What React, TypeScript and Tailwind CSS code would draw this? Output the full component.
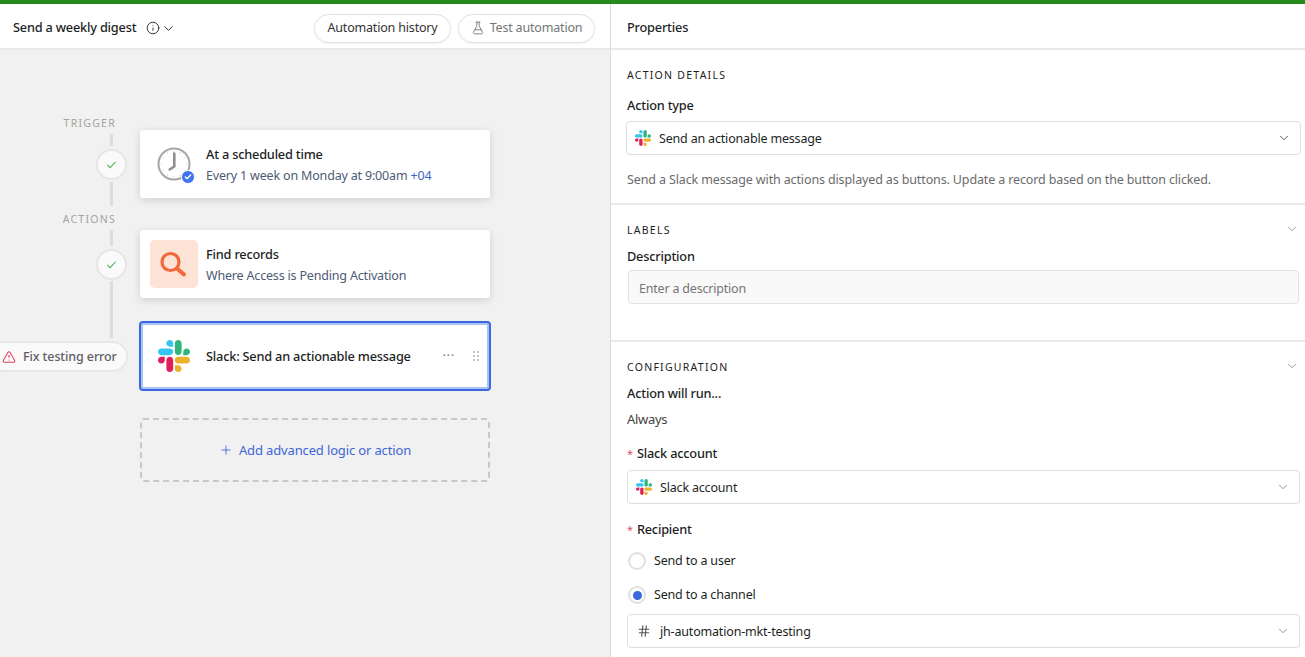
import { Check, ChevronDown, FlaskConical, Hash, Info, Plus, TriangleAlert, X } from "lucide-react";

const body = "text-[12.5px] tracking-[-0.18px]";
const strong = "text-[12.75px] tracking-[-0.2px] font-medium text-[#1d1f25]";

const SlackLogo = ({ className }: { className: string }) => (
	<svg viewBox="0 0 122.8 122.8" className={className}>
		<path d="M25.8 77.6c0 7.1-5.8 12.9-12.9 12.9S0 84.7 0 77.6s5.8-12.9 12.9-12.9h12.9v12.9z" fill="#E01E5A" />
		<path d="M32.3 77.6c0-7.1 5.8-12.9 12.9-12.9s12.9 5.8 12.9 12.9v32.3c0 7.1-5.8 12.9-12.9 12.9s-12.9-5.8-12.9-12.9V77.6z" fill="#E01E5A" />
		<path d="M45.2 25.8c-7.1 0-12.9-5.8-12.9-12.9S38.1 0 45.2 0s12.9 5.8 12.9 12.9v12.9H45.2z" fill="#36C5F0" />
		<path d="M45.2 32.3c7.1 0 12.9 5.8 12.9 12.9s-5.8 12.9-12.9 12.9H12.9C5.8 58.1 0 52.3 0 45.2s5.8-12.9 12.9-12.9h32.3z" fill="#36C5F0" />
		<path d="M97 45.2c0-7.1 5.8-12.9 12.9-12.9s12.9 5.8 12.9 12.9-5.8 12.9-12.9 12.9H97V45.2z" fill="#2EB67D" />
		<path d="M90.5 45.2c0 7.1-5.8 12.9-12.9 12.9s-12.9-5.8-12.9-12.9V12.9C64.7 5.8 70.5 0 77.6 0s12.9 5.8 12.9 12.9v32.3z" fill="#2EB67D" />
		<path d="M77.6 97c7.1 0 12.9 5.8 12.9 12.9s-5.8 12.9-12.9 12.9-12.9-5.8-12.9-12.9V97h12.9z" fill="#ECB22E" />
		<path d="M77.6 90.5c-7.1 0-12.9-5.8-12.9-12.9s5.8-12.9 12.9-12.9h32.3c7.1 0 12.9 5.8 12.9 12.9s-5.8 12.9-12.9 12.9H77.6z" fill="#ECB22E" />
	</svg>
);

const ticks = [30, 60, 90, 120, 150, 180, 210, 240, 270, 300, 330, 360];

const ClockIcon = () => (
	<div className="relative w-[34px] h-[34px]">
		<svg viewBox="0 0 34 34" className="w-[34px] h-[34px]">
			<circle cx="17" cy="17" r="15.5" fill="white" stroke="#a6a6a6" strokeWidth="2" />
			{ticks.map((a) => (
				<line key={a} x1="17" y1="3.5" x2="17" y2="5" stroke="#dcdcdc" strokeWidth="1" transform={`rotate(${a} 17 17)`} />
			))}
			<path d="M17.3 6.5V19.5L12.7 22.5" fill="none" stroke="#8f8f8f" strokeWidth="2.6" strokeLinecap="round" strokeLinejoin="round" />
		</svg>
		<div className="absolute right-[-4px] bottom-[-3px] w-[14px] h-[14px] rounded-full bg-[#3f75ea] border-[1.5px] border-white flex items-center justify-center">
			<Check className="w-[8px] h-[8px] text-white" strokeWidth={4} />
		</div>
	</div>
);

const SearchTile = () => (
	<div className="ml-[10px] mr-[8px] w-[48px] h-[48px] rounded-[5px] bg-[#fde3d6]">
		<svg viewBox="0 0 48 48" className="w-[48px] h-[48px]">
			<circle cx="20.5" cy="22" r="8.5" fill="none" stroke="#f0683c" strokeWidth="3.2" />
			<line x1="27" y1="28.5" x2="34" y2="34.5" stroke="#f0683c" strokeWidth="4" strokeLinecap="round" />
		</svg>
	</div>
);

const Line = ({ className }: { className: string }) => <div className={`ml-[110px] w-[3px] bg-[#dcdcdc] ${className}`} />;

const StepDot = () => (
	<div className="ml-[96px] w-[31px] h-[31px] rounded-full bg-[#fafafa] border-2 border-[#e6e6e6] flex items-center justify-center">
		<svg viewBox="0 0 12 12" className="w-[11px] h-[11px]">
			<path d="M1.5 6.5L4.5 9.5L10.5 3" fill="none" stroke="#4aae50" strokeWidth="1.1" />
		</svg>
	</div>
);

const StepLabel = ({ children }: { children: string }) => (
	<div className="w-[116px] h-[16px] text-right text-[10.5px] leading-[16px] tracking-[0.12em] text-[#a3a3a3]">{children}</div>
);

const Timeline = () => (
	<div className="w-[140px] shrink-0 flex flex-col">
		<StepLabel>TRIGGER</StepLabel>
		<Line className="h-[12px] mt-[3px]" />
		<div className="mt-[3px]">
			<StepDot />
		</div>
		<Line className="h-[24px] mt-[2px]" />
		<div className="mt-[5px]">
			<StepLabel>ACTIONS</StepLabel>
		</div>
		<Line className="h-[16px] mt-[3px]" />
		<div className="mt-[3px]">
			<StepDot />
		</div>
		<Line className="h-[57px] mt-[1px]" />
		<div className="mt-[3px] ml-[-12px] w-[140px] h-[31px] rounded-full bg-[#fafafa] border-2 border-[#e8e8e8] flex items-center pl-[12px] gap-[7px] text-[12.5px] tracking-[-0.1px] font-medium text-[#5e5e66]">
			<TriangleAlert className="w-[14px] h-[14px] text-[#dc3c5e]" strokeWidth={1.75} />
			<span className="pt-[1px]">Fix testing error</span>
		</div>
	</div>
);

const Cards = () => (
	<div className="w-[350px] shrink-0 flex flex-col mt-[15px]">
		<div className="h-[68px] bg-white rounded-[3px] shadow-[0_2px_8px_rgba(0,0,0,0.14)] flex items-center">
			<div className="w-[66px] pl-[17px]">
				<ClockIcon />
			</div>
			<div className="pt-[2px]">
				<div className={`${strong} leading-[21px]`}>At a scheduled time</div>
				<div className={`${body} leading-[21px] text-[#4d5a75]`}>
					Every 1 week on Monday at 9:00am <span className="text-[#3a66c8]">+04</span>
				</div>
			</div>
		</div>
		<div className="mt-[32px] h-[68px] bg-white rounded-[3px] shadow-[0_2px_8px_rgba(0,0,0,0.14)] flex items-center">
			<SearchTile />
			<div className="pt-[2px]">
				<div className={`${strong} leading-[21px]`}>Find records</div>
				<div className={`${body} leading-[21px] text-[#4d5a75]`}>Where Access is Pending Activation</div>
			</div>
		</div>
		<div className="mt-[23px] mx-[-1px] h-[70px] bg-white rounded-[4px] border-2 border-[#3a68dc] shadow-[inset_0_0_0_2px_#a9c2f8] flex items-center">
			<div className="w-[65px] flex justify-center">
				<SlackLogo className="w-[32px] h-[32px]" />
			</div>
			<div className={`flex-1 pt-[2px] ${strong}`}>Slack: Send an actionable message</div>
			<div className="text-[#8a8a8a] tracking-[1px] text-[11px] font-bold mr-[18px] leading-none pb-[4px]">···</div>
			<div className="grid grid-cols-2 gap-[2px] mr-[10px]">
				{[0, 1, 2, 3, 4, 5].map((i) => (
					<div key={i} className="w-[2px] h-[2px] bg-[#c4c4c4]" />
				))}
			</div>
		</div>
		<div className="mt-[27px] h-[64px] rounded-[3px] border-2 border-dashed border-[#c8c8c8] flex items-center justify-center gap-[6px] text-[13px] tracking-[-0.14px] text-[#3f66d8]">
			<Plus className="w-[14px] h-[14px]" strokeWidth={1.5} />
			<span className="pt-[2px]">Add advanced logic or action</span>
		</div>
	</div>
);

const Heading = ({ children }: { children: string }) => (
	<div className="text-[10.5px] leading-[16px] tracking-[0.12em] text-[#1d1d1d]">{children}</div>
);

const Required = ({ children }: { children: string }) => (
	<div className={`${strong} leading-[18px]`}>
		<span className="text-[#d9506e] font-normal text-[11px] mr-[4px]">*</span>
		{children}
	</div>
);

const SelectBox = ({ icon, label, className, arrow }: { icon: React.ReactNode; label: string; className: string; arrow: string }) => (
	<div className={`h-[34px] border border-[#dedede] rounded-[4px] flex items-center bg-white ${className}`}>
		<div className="w-[32px] flex justify-center">{icon}</div>
		<span className={`flex-1 pt-[2px] ${body} text-[#1d1f25]`}>{label}</span>
		<ChevronDown className={`w-[14px] h-[14px] mr-[9px] ${arrow}`} strokeWidth={1.5} />
	</div>
);

const Radio = ({ checked, label, className }: { checked?: boolean; label: string; className: string }) => (
	<div className={`flex items-center gap-[8px] ml-[1px] ${body} leading-[18px] text-[#1d1f25] ${className}`}>
		<div className="w-[18px] h-[18px] rounded-full border-2 border-[#e0e0e0] flex items-center justify-center">
			{checked && <div className="w-[9px] h-[9px] rounded-full bg-[#3a68dc]" />}
		</div>
		{label}
	</div>
);

const Panel = () => (
	<div className="flex-1 min-w-0 border-l border-[#dcdcdc] bg-white">
		<div className="h-[46px] border-b-2 border-[#e9e9e9] pl-[16px] pt-[4px] flex items-center justify-between">
			<span className={strong}>Properties</span>
			<X className="w-[14px] h-[14px] mr-[-13px] text-[#444]" strokeWidth={1.5} />
		</div>
		<div className="h-[155px] border-b-2 border-[#e9e9e9] pl-[16px] pr-[4px] pt-[17px]">
			<Heading>ACTION DETAILS</Heading>
			<div className={`mt-[13px] leading-[18px] ${strong}`}>Action type</div>
			<SelectBox className="mt-[7px] ml-[-1px]" arrow="text-[#444]" icon={<SlackLogo className="w-[16px] h-[16px]" />} label="Send an actionable message" />
			<div className="mt-[16px] text-[12.5px] tracking-[-0.13px] leading-[18px] text-[#6b6b6b]">
				Send a Slack message with actions displayed as buttons. Update a record based on the button clicked.
			</div>
		</div>
		<div className="h-[137px] border-b-2 border-[#e9e9e9] pl-[16px] pr-[6px] pt-[17px]">
			<div className="flex items-center justify-between">
				<Heading>LABELS</Heading>
				<ChevronDown className="w-[14px] h-[14px] mb-[2px] text-[#777]" strokeWidth={1.25} />
			</div>
			<div className={`mt-[9px] leading-[18px] ${strong}`}>Description</div>
			<div className="mt-[5px] ml-[1px] h-[34px] rounded-[4px] border border-[#e2e2e2] bg-[#f9f9f9] pl-[10px] pt-[4px] flex items-center text-[12.5px] tracking-[-0.2px] text-[#757575]">
				Enter a description
			</div>
		</div>
		<div className="pl-[16px] pr-[5px] pt-[17px]">
			<div className="flex items-center justify-between">
				<Heading>CONFIGURATION</Heading>
				<ChevronDown className="w-[14px] h-[14px] mr-[1px] mb-[2px] text-[#777]" strokeWidth={1.25} />
			</div>
			<div className={`mt-[9px] leading-[18px] ${strong}`}>Action will run...</div>
			<div className="mt-[8px] text-[13px] tracking-[-0.3px] leading-[18px] text-[#444]">Always</div>
			<div className="mt-[16px]">
				<Required>Slack account</Required>
			</div>
			<SelectBox className="mt-[7px]" arrow="text-[#888]" icon={<SlackLogo className="w-[16px] h-[16px]" />} label="Slack account" />
			<div className="mt-[16px]">
				<Required>Recipient</Required>
			</div>
			<Radio className="mt-[13px]" label="Send to a user" />
			<Radio checked className="mt-[16px]" label="Send to a channel" />
			<SelectBox className="mt-[10px]" arrow="text-[#888]" icon={<Hash className="w-[14px] h-[14px] text-[#555]" strokeWidth={2} />} label="jh-automation-mkt-testing" />
		</div>
	</div>
);

const App = () => {
	return (
		<div className="w-[1305px] h-[657px] overflow-hidden bg-white flex flex-col font-['Noto_Sans',sans-serif]">
			<div className="h-[4px] bg-[#248a1a] shrink-0" />
			<div className="flex flex-1 min-h-0">
				<div className="w-[610px] shrink-0 flex flex-col">
					<div className="h-[46px] shrink-0 border-b-2 border-[#e9e9e9] bg-white flex items-center pl-[13px] pr-[15px] pt-[4px]">
						<span className={strong}>Send a weekly digest</span>
						<Info className="w-[14px] h-[14px] ml-[10px] text-[#222]" strokeWidth={1.5} />
						<ChevronDown className="w-[15px] h-[15px] ml-[1px] text-[#222]" strokeWidth={1.5} />
						<div className="flex-1" />
						<div className={`w-[137px] h-[29px] rounded-full border border-[#e0e0e0] shadow-[0_1px_2px_rgba(0,0,0,0.06)] flex items-center justify-center ${body} text-[#333]`}>
							Automation history
						</div>
						<div className={`ml-[7px] w-[137px] h-[29px] rounded-full border border-[#e0e0e0] shadow-[0_1px_2px_rgba(0,0,0,0.06)] flex items-center justify-center gap-[5px] ${body} text-[#757575]`}>
							<FlaskConical className="w-[14px] h-[14px]" strokeWidth={1.5} />
							Test automation
						</div>
					</div>
					<div className="flex-1 bg-[#f1f1f1] pt-[65px] flex overflow-hidden">
						<Timeline />
						<Cards />
					</div>
				</div>
				<Panel />
			</div>
		</div>
	);
};

export default App;
